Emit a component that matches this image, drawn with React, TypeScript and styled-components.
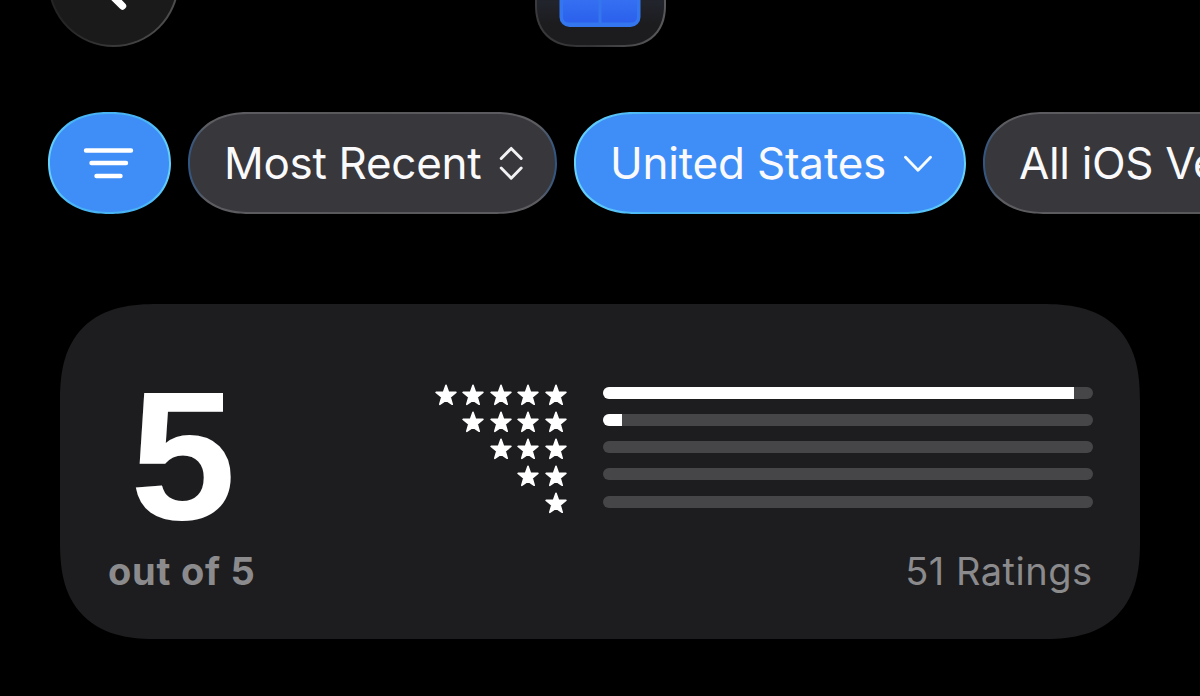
import React from "react";
import styled, { createGlobalStyle, css } from "styled-components";

const GlobalStyle = createGlobalStyle`
  body {
    margin: 0;
    background: #000;
    overflow: hidden;
    font-family: Inter, "Liberation Sans", sans-serif;
  }
`;

const Screen = styled.main`
  width: 1200px;
  height: 696px;
  overflow: hidden;
  background: #000;
  color: #fff;
  display: flex;
  flex-direction: column;
`;

const Header = styled.header`
  height: 47px;
  flex: none;
  overflow: hidden;
  padding: 0 48px;
  display: grid;
  grid-template-columns: 1fr auto 1fr;
  grid-template-rows: 47px;
  align-items: end;
`;

const BackButton = styled.button`
  width: 131px;
  height: 131px;
  box-sizing: border-box;
  padding: 0;
  border: 2px solid transparent;
  border-radius: 50%;
  background:
    linear-gradient(#1a1a1a, #1a1a1a) padding-box,
    linear-gradient(100deg, #242424 20%, #3a3a3a 60%, #4c4c4c 85%) border-box;
  display: flex;
  align-items: center;
  justify-content: center;
`;

const AppIcon = styled.div`
  width: 131px;
  height: 131px;
  box-sizing: border-box;
  border: 2px solid transparent;
  border-radius: 34px;
  background:
    linear-gradient(#1d1e22 60%, #22242d 66%, #1c1c1e 84%) padding-box,
    linear-gradient(100deg, #3a3a3c 10%, #343436 50%, #58585a 95%) border-box;
  display: flex;
  align-items: center;
  justify-content: center;
  @supports (corner-shape: superellipse(1.3)) {
    border-radius: 42px;
    corner-shape: superellipse(1.2);
  }
`;

const Filters = styled.nav`
  flex: none;
  margin-top: 65px;
  padding-left: 48px;
  display: flex;
  gap: 17.5px;
`;

const activeChip = css`
  background:
    linear-gradient(#3f8ef7, #3f8ef7) padding-box,
    linear-gradient(90deg, #66d2fb, #48b4f4 20%, #48b4f4 80%, #66d2fb) border-box;
`;

const idleChip = css`
  background:
    linear-gradient(#38373b, #38373b) padding-box,
    linear-gradient(90deg, #2e5585, #5d5d61 18px, #58585b 50%, #5d5d61 calc(100% - 18px), #2e5585) border-box;
`;

const Chip = styled.button<{ $width: number; $active?: boolean; $center?: boolean }>`
  flex: none;
  width: ${(p) => p.$width}px;
  height: 102px;
  box-sizing: border-box;
  padding: 0 0 0 ${(p) => (p.$center ? 0 : 34)}px;
  border: 2px solid transparent;
  border-radius: 60px / 51px;
  @supports (corner-shape: superellipse(1.12)) {
    corner-shape: superellipse(1.12);
  }
  ${(p) => (p.$active ? activeChip : idleChip)}
  color: #fafafc;
  font: 400 44px/1 Inter, "Liberation Sans", sans-serif;
  white-space: nowrap;
  display: flex;
  align-items: center;
  justify-content: ${(p) => (p.$center ? "center" : "flex-start")};
  gap: 18px;
`;

const ChipLabel = styled.span<{ $tracking: number }>`
  letter-spacing: ${(p) => p.$tracking}px;
`;

const Card = styled.section`
  flex: none;
  width: 1080px;
  height: 335px;
  margin: 90px 0 0 60px;
  box-sizing: border-box;
  padding: 75px 47.5px 0 48px;
  background: #1d1d1f;
  border-radius: 78px;
  display: grid;
  grid-template-columns: 150px 1fr;
  grid-template-rows: 167px 50px;
  @supports (corner-shape: superellipse(1.35)) {
    border-radius: 98px;
    corner-shape: superellipse(1.35);
  }
`;

const Score = styled.div`
  font-family: "Liberation Sans", sans-serif;
  font-size: 184px;
  font-weight: 700;
  line-height: 153px;
  text-align: center;
  transform: scaleX(1.035);
`;

const Histogram = styled.div`
  justify-self: end;
  padding-top: 0.5px;
`;

const Stars = styled.div`
  display: flex;
  gap: 5.6px;
  margin: 4px 36px 0 0;
`;

const Track = styled.div`
  width: 489.5px;
  height: 12px;
  border-radius: 6px;
  background: #464648;
  overflow: hidden;
`;

const HistogramRow = styled.div`
  height: 27px;
  display: flex;
  align-items: center;
  justify-content: flex-end;
  &:last-child ${Track} {
    margin-top: 2px;
  }
`;

const Fill = styled.div`
  height: 100%;
  background: #fff;
`;

const OutOf = styled.div`
  font-size: 38px;
  font-weight: 700;
  line-height: 50px;
  letter-spacing: 0.75px;
  color: #8b8b8d;
  white-space: nowrap;
`;

const RatingCount = styled.div`
  font-size: 38px;
  line-height: 50px;
  letter-spacing: 0.5px;
  color: #8b8b8d;
  text-align: right;
`;

const Star = () => (
  <svg width="22" height="22" viewBox="0 0 22 22" fill="#fff" stroke="#fff" strokeWidth="1.6" strokeLinejoin="round">
    <path d="M11 1.3 13.4 8.1 20.9 8.4 15.1 13 17.2 20.3 11 16.1 4.8 20.3 6.9 13 1.1 8.4 8.6 8.1Z" />
  </svg>
);

const BackIcon = () => (
  <svg width="40" height="62" viewBox="0 0 40 62" fill="none" stroke="#fff" strokeWidth="7.4" strokeLinecap="round" strokeLinejoin="round">
    <path d="M28.5 7 4.5 31 28.5 55" />
  </svg>
);

const WindowGlyph = () => (
  <svg width="82" height="90" viewBox="0 0 82 90">
    <defs>
      <linearGradient id="pane" x1="0" y1="0" x2="0" y2="1">
        <stop offset="0.6" stopColor="#3a76f4" />
        <stop offset="1" stopColor="#2b60ec" />
      </linearGradient>
    </defs>
    <rect x="0.5" width="81" height="90" rx="10" fill="#3376ee" />
    <path d="M4 4H39.5V85.5H10Q4 85.5 4 79.5ZM42.5 4H78V79.5Q78 85.5 72 85.5H42.5Z" fill="url(#pane)" />
  </svg>
);

const FilterIcon = () => (
  <svg width="52" height="34" viewBox="0 0 52 34" fill="none" stroke="#fff" strokeWidth="4.4" strokeLinecap="round">
    <path d="M3 4.5H48M8.5 17H43M13.5 30H37.5" />
  </svg>
);

const SortIcon = () => (
  <svg width="24" height="34" viewBox="0 0 24 34" fill="none" stroke="#f2f2f4" strokeWidth="2.9" strokeLinecap="round" strokeLinejoin="round">
    <path d="M2.2 12.5 12.2 2.4 22.2 12.5M2.2 22 12.2 32.2 22.2 22" />
  </svg>
);

const ChevronIcon = () => (
  <svg width="28" height="18" viewBox="0 0 28 18" fill="none" stroke="#f6fbff" strokeWidth="2.9" strokeLinecap="round" strokeLinejoin="round">
    <path d="M1.5 4 14 17 26.5 4" transform="translate(0 -0.8)" />
  </svg>
);

const distribution = [
  { stars: 5, share: 96.2 },
  { stars: 4, share: 3.9 },
  { stars: 3, share: 0 },
  { stars: 2, share: 0 },
  { stars: 1, share: 0 },
];

export default function App() {
  return (
    <>
      <GlobalStyle />
      <Screen>
        <Header>
          <BackButton aria-label="Back">
            <BackIcon />
          </BackButton>
          <AppIcon>
            <WindowGlyph />
          </AppIcon>
        </Header>
        <Filters>
          <Chip $width={122.5} $active $center aria-label="Filters">
            <FilterIcon />
          </Chip>
          <Chip $width={368.5}>
            <ChipLabel $tracking={-0.3}>Most Recent</ChipLabel>
            <SortIcon />
          </Chip>
          <Chip $width={391.5} $active>
            <ChipLabel $tracking={-0.2}>United States</ChipLabel>
            <ChevronIcon />
          </Chip>
          <Chip $width={420}>
            <ChipLabel $tracking={-0.35}>All iOS Versions</ChipLabel>
          </Chip>
        </Filters>
        <Card>
          <Score>5</Score>
          <Histogram>
            {distribution.map((row) => (
              <HistogramRow key={row.stars}>
                <Stars>
                  {Array.from({ length: row.stars }, (_, i) => (
                    <Star key={i} />
                  ))}
                </Stars>
                <Track>
                  <Fill style={{ width: `${row.share}%` }} />
                </Track>
              </HistogramRow>
            ))}
          </Histogram>
          <OutOf>out of 5</OutOf>
          <RatingCount>51 Ratings</RatingCount>
        </Card>
      </Screen>
    </>
  );
}
